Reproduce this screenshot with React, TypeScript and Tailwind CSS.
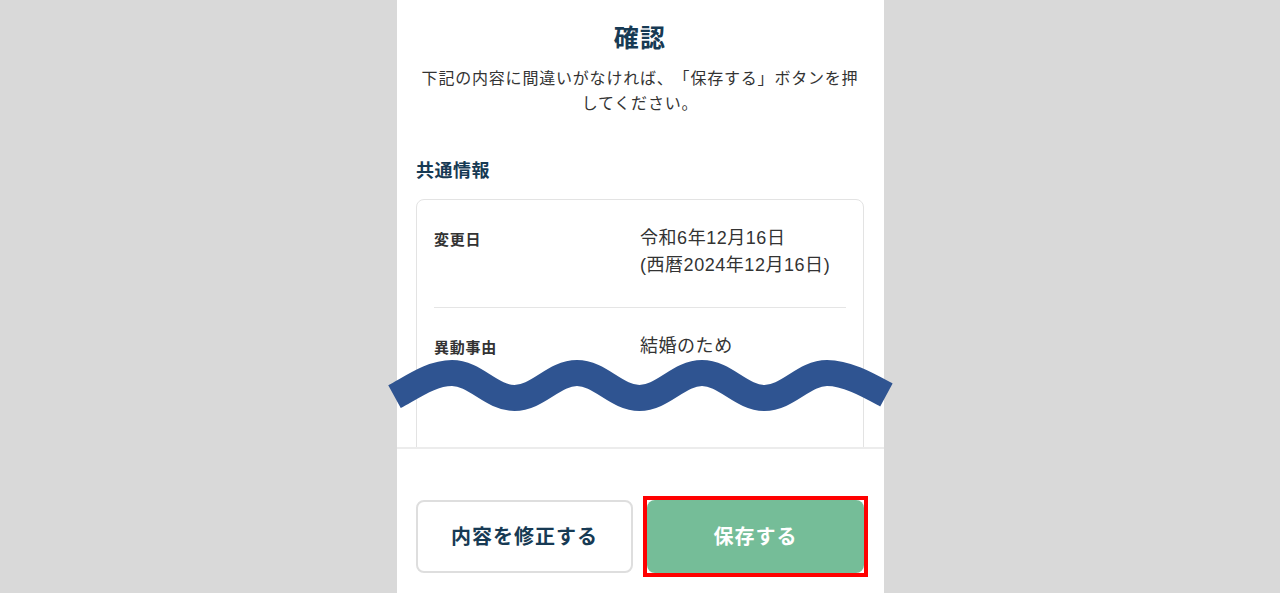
import React from 'react';

interface Row {
  label: string;
  value: string[];
}

const rows: Row[] = [
  { label: '変更日', value: ['令和6年12月16日', '(西暦2024年12月16日)'] },
  { label: '異動事由', value: ['結婚のため'] },
];

const Wave: React.FC = () => (
  <svg
    className="absolute left-[-17px] top-[350px] w-[520px] h-[70px] overflow-visible"
    viewBox="380 350 520 70"
    aria-hidden="true"
  >
    <path
      d="M394.5,396.7 C414,386 432,373 452,373 C475,373 491.5,398 514.5,398 C537.5,398 554,373 577,373 C600,373 616.5,398 639.5,398 C662.5,398 679,373 702,373 C725,373 741.5,398 764.5,398 C787.5,398 804,373 827,373 C847,373 868,385 886.4,395"
      fill="none"
      stroke="#2f5491"
      strokeWidth={26}
      strokeLinecap="butt"
    />
  </svg>
);

const App: React.FC = () => {
  return (
    <div className="min-h-screen bg-[#d9d9d9] flex justify-center pl-px font-['Liberation_Sans','Noto_Sans_CJK_JP',sans-serif] [text-spacing-trim:space-all]">
      <div className="relative w-[487px] h-[593px] bg-white flex flex-col">
        <div className="h-[447px] overflow-hidden pl-[19px] pr-[20px] pt-[20px]">
          <h1 className="text-center text-[25px] leading-[36px] font-bold tracking-[0.05em] text-[#173a54]">確認</h1>
          <p className="mt-[10px] text-center text-[16px] leading-[25px] tracking-[0.05em] text-[#333]">
            下記の内容に間違いがなければ、「保存する」ボタンを押してください。
          </p>

          <h2 className="mt-[42px] text-[18px] leading-[26px] font-bold tracking-[0.03em] text-[#173a54]">共通情報</h2>
          <div className="mt-[15px] min-h-[320px] border border-[#e3e3e3] rounded-lg px-[17px]">
            {rows.map((row, i) => (
              <div
                key={row.label}
                className={`grid grid-cols-2 pt-[25px] pb-[28px] ${i < rows.length - 1 ? 'border-b border-[#e5e5e5]' : ''}`}
              >
                <div className="mt-[1px] text-[15px] leading-[27px] font-bold tracking-[0.05em] text-[#333]">{row.label}</div>
                <div className="text-[18px] leading-[27px] tracking-[0.03em] text-[#333]">
                  {row.value.map(v => (
                    <div key={v}>{v}</div>
                  ))}
                </div>
              </div>
            ))}
          </div>
        </div>

        <div className="flex-1 border-t-2 border-[#ececec] pl-[19px] pr-[20px] pt-[51px]">
          <div className="flex gap-[14px]">
            <button className="w-[217px] h-[73px] rounded-lg border-2 border-[#dedede] bg-white text-[20px] font-bold tracking-[0.05em] text-[#173a54]">
              内容を修正する
            </button>
            <div className="relative">
              <button className="w-[217px] h-[73px] rounded-lg bg-[#75bd98] text-[20px] font-bold tracking-[0.05em] text-white">
                保存する
              </button>
              <div className="absolute -inset-[4px] border-4 border-[#ff0000] pointer-events-none" />
            </div>
          </div>
        </div>

        <Wave />
      </div>
    </div>
  );
};

export default App;
